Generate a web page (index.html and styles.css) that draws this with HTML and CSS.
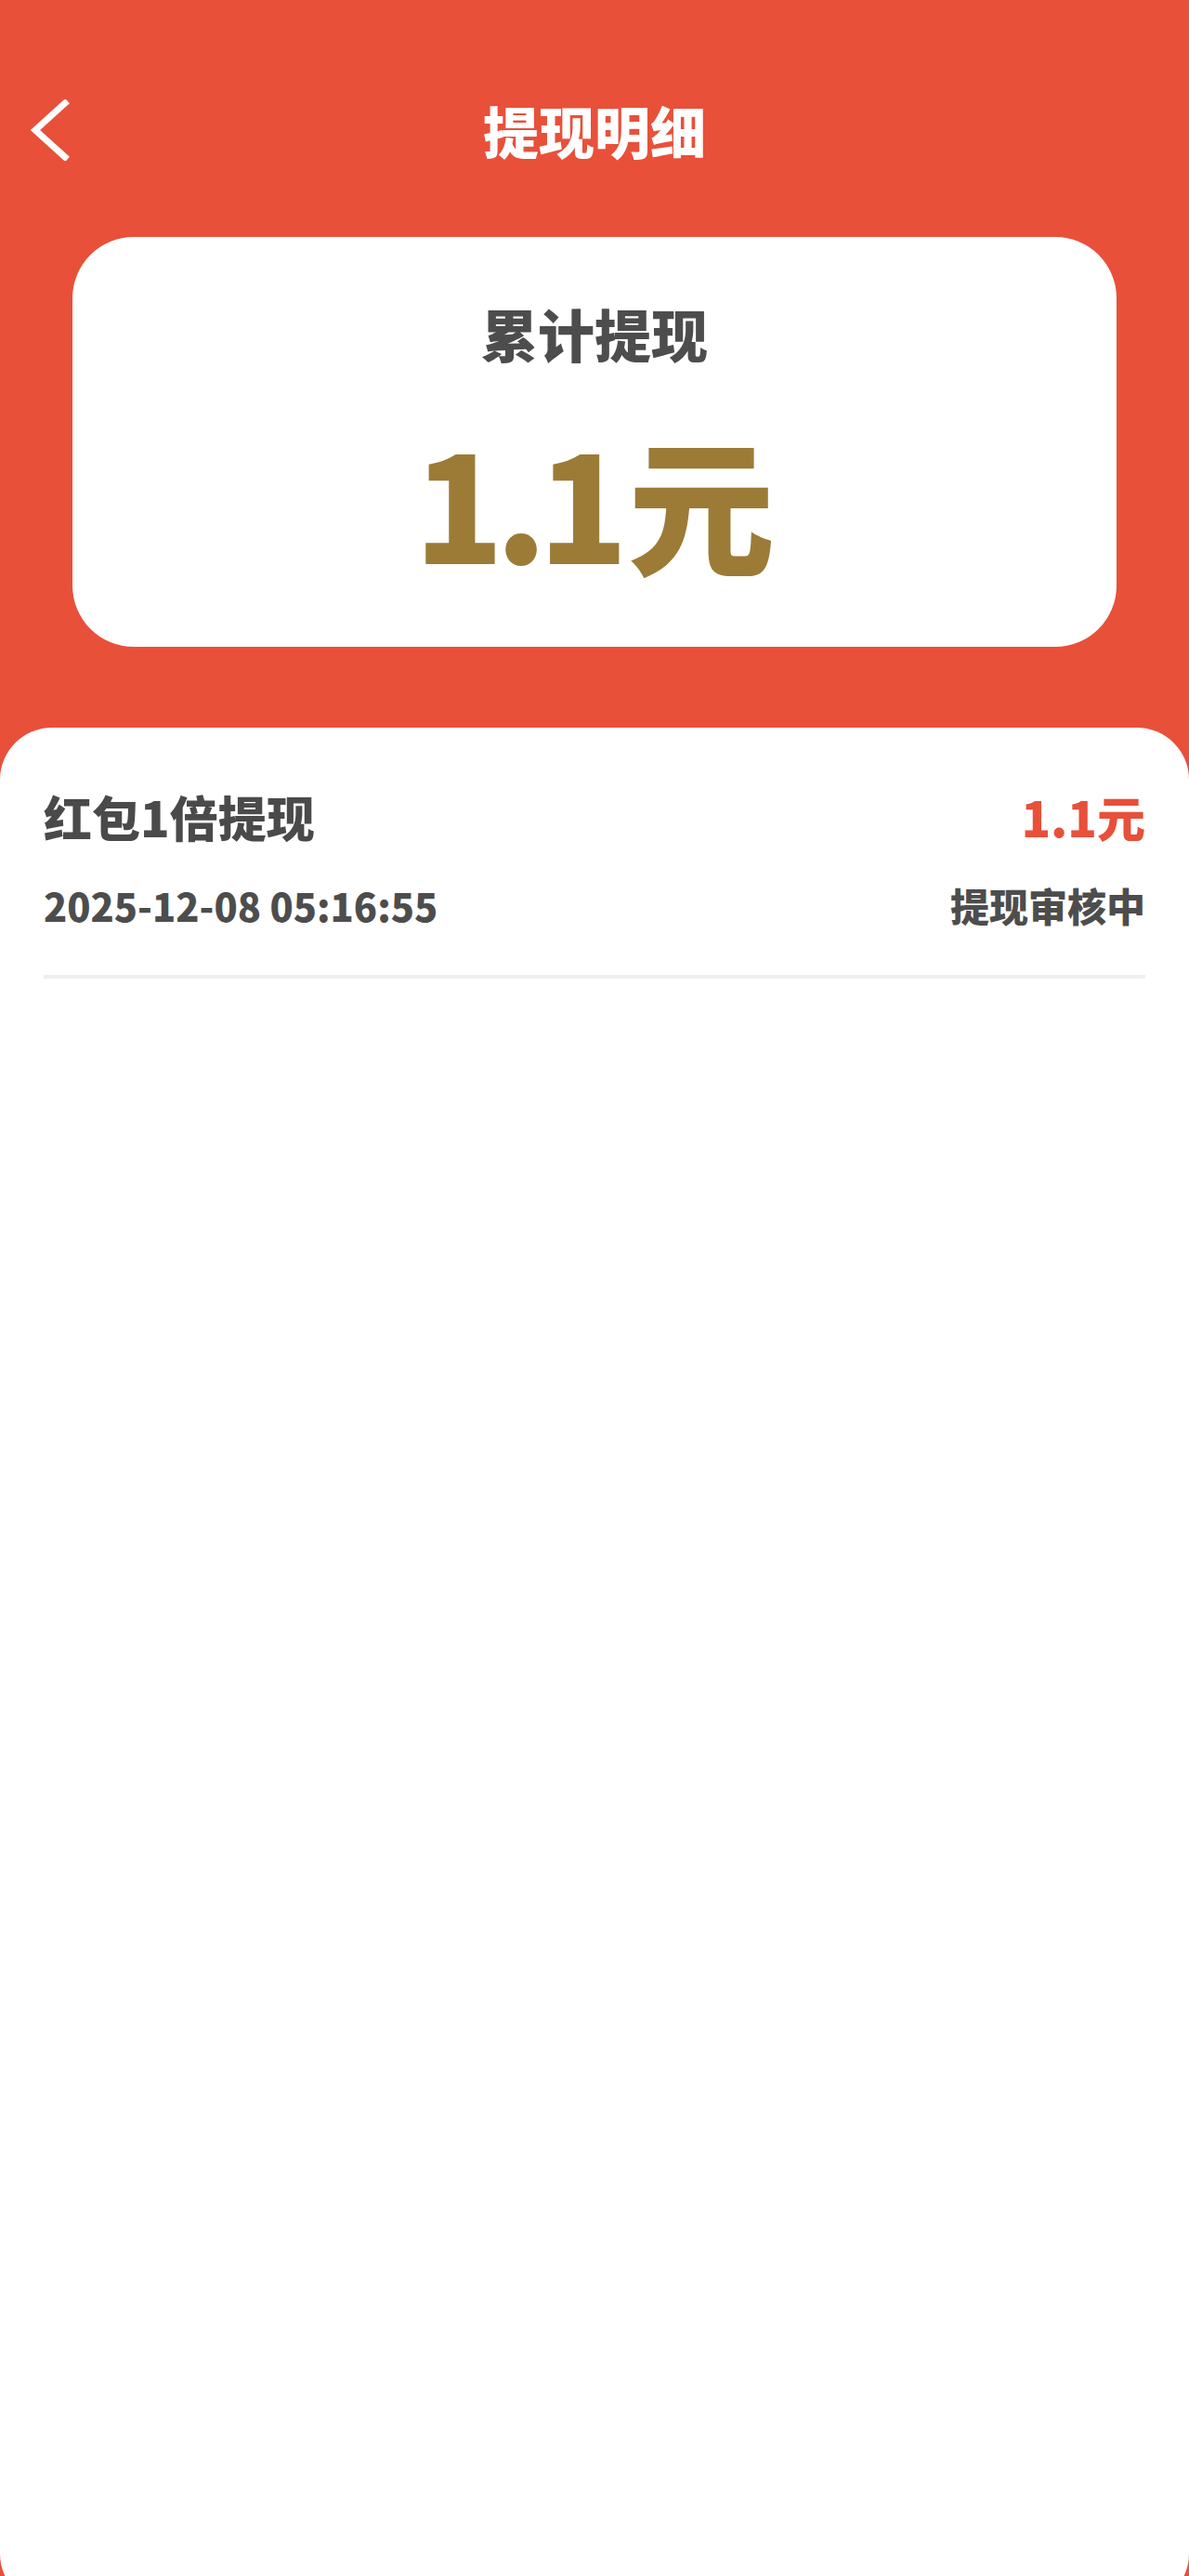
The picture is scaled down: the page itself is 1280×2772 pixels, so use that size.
FILE: index.html
```html
<!DOCTYPE html>
<html lang="zh-CN">
<head>
  <meta charset="UTF-8" />
  <meta name="viewport" content="width=device-width, initial-scale=1.0"/>
  <title>提现明细</title>
  <link rel="stylesheet" href="styles.css">
</head>
<body>
  <div class="header">
    <a class="back" href="#">
      <svg width="44" height="66" viewBox="0 0 44 66">
        <path d="M38 4 L6 33 L38 62" fill="none" stroke="#fff" stroke-width="7" stroke-linecap="square" stroke-linejoin="miter"/>
      </svg>
    </a>
    <h1 class="title">提现明细</h1>
    <span></span>
  </div>

  <!-- 累计 -->
  <div class="total-card">
    <p class="total-label">累计提现</p>
    <p class="total-amount"><span class="num">1.1</span>元</p>
  </div>

  <div class="sheet">
    <div class="record">
      <div class="record-row">
        <span class="record-name">红包1倍提现</span>
        <span class="record-money">1.1元</span>
      </div>
      <div class="record-row sub">
        <span class="record-time">2025-12-08 05:16:55</span>
        <span class="record-status">提现审核中</span>
      </div>
    </div>
  </div>
</body>
</html>
```

FILE: styles.css
```css
body {
  margin: 0;
  height: 2772px;
  overflow: hidden;
  background: #e8503a;
  font-family: "Noto Sans CJK SC", "Noto Sans", sans-serif;
}

.header {
  display: grid;
  grid-template-columns: 1fr auto 1fr;
  align-items: center;
  padding-top: 107px;
}
.back { display: flex; padding-left: 32px; }
.title {
  margin: 0;
  font-size: 60px;
  line-height: 60px;
  font-weight: 900;
  color: #fff;
}

.total-card {
  margin: 82px 78px 0;
  height: 441px;
  box-sizing: border-box;
  padding-top: 73px;
  background: #fff;
  border-radius: 66px;
  text-align: center;
}
.total-label {
  margin: 0;
  font-size: 61px;
  line-height: 62px;
  font-weight: 900;
  color: #4d4d4d;
}
.total-amount {
  margin: 70px 0 0;
  font-size: 158px;
  line-height: 158px;
  font-weight: 900;
  color: #9c7b36;
}
.total-amount .num { letter-spacing: -9px; margin-right: 9px; }

.sheet {
  margin-top: 87px;
  height: 2021px;
  background: #fff;
  border-radius: 56px;
  padding: 0 47px;
}
.record {
  padding-top: 70px;
  padding-bottom: 54px;
  border-bottom: 4px solid #efefef;
}
.record-row {
  display: flex;
  justify-content: space-between;
  align-items: center;
  font-weight: 900;
}
.record-name { font-size: 52px; line-height: 52px; color: #4a4a4a; }
.record-money { font-size: 52px; line-height: 52px; color: #e8503a; }
.record-row.sub { margin-top: 48px; }
.record-time { font-size: 41.5px; line-height: 42px; color: #4d4d4d; }
.record-status { font-size: 42px; line-height: 42px; color: #4d4d4d; }
```
